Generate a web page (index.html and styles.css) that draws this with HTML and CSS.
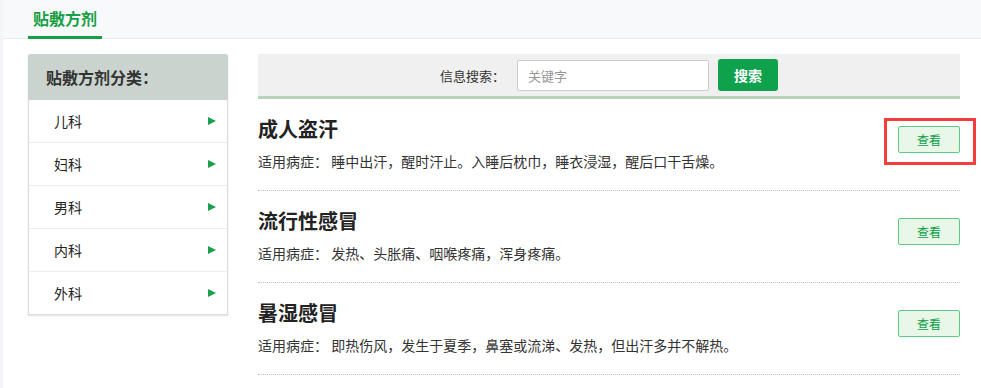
FILE: index.html
```html
<!DOCTYPE html>
<html lang="zh-CN">
<head>
    <meta charset="UTF-8">
    <meta name="viewport" content="width=device-width, initial-scale=1.0">
    <title>贴敷方剂</title>
    <link rel="stylesheet" href="styles.css">
</head>
<body>
    <header class="topbar">
        <a class="tab active" href="#">贴敷方剂</a>
    </header>
    <div class="container">
        <aside class="sidebar">
            <div class="sidebar-head">贴敷方剂分类：</div>
            <ul class="cat-list">
                <li><a href="#">儿科</a><span class="arrow"></span></li>
                <li><a href="#">妇科</a><span class="arrow"></span></li>
                <li><a href="#">男科</a><span class="arrow"></span></li>
                <li><a href="#">内科</a><span class="arrow"></span></li>
                <li><a href="#">外科</a><span class="arrow"></span></li>
            </ul>
        </aside>
        <main class="main">
            <form class="search-bar">
                <label for="kw">信息搜索：</label>
                <input type="text" id="kw" placeholder="关键字">
                <button type="button">搜索</button>
            </form>
            <ul class="recipe-list">
                <li class="recipe">
                    <div class="recipe-info">
                        <h3>成人盗汗</h3>
                        <p>适用病症： 睡中出汗，醒时汗止。入睡后枕巾，睡衣浸湿，醒后口干舌燥。</p>
                    </div>
                    <div class="view-wrap">
                        <a class="view-btn" href="#">查看</a>
                        <span class="highlight"></span>
                    </div>
                </li>
                <li class="recipe">
                    <div class="recipe-info">
                        <h3>流行性感冒</h3>
                        <p>适用病症： 发热、头胀痛、咽喉疼痛，浑身疼痛。</p>
                    </div>
                    <div class="view-wrap">
                        <a class="view-btn" href="#">查看</a>
                    </div>
                </li>
                <li class="recipe">
                    <div class="recipe-info">
                        <h3>暑湿感冒</h3>
                        <p>适用病症： 即热伤风，发生于夏季，鼻塞或流涕、发热，但出汗多并不解热。</p>
                    </div>
                    <div class="view-wrap">
                        <a class="view-btn" href="#">查看</a>
                    </div>
                </li>
            </ul>
        </main>
    </div>
</body>
</html>
```

FILE: styles.css
```css
body {
    margin: 0;
    padding: 0;
    font-family: "Noto Sans CJK SC", "Noto Sans", sans-serif;
    color: #333;
    background: #fff;
    border-left: 3px solid #f3f4f8;
    min-height: 388px;
    box-sizing: border-box;
}
ul {
    list-style: none;
    margin: 0;
    padding: 0;
}
a {
    text-decoration: none;
    color: inherit;
}
.topbar {
    height: 38px;
    background: #f8f9fb;
    border-bottom: 1px solid #ececec;
    padding-left: 25px;
    display: flex;
    align-items: stretch;
}
.tab {
    display: block;
    padding: 0 5px;
    font-size: 16px;
    font-weight: 700;
    line-height: 36px;
    color: #17a043;
    border-bottom: 3px solid #17a043;
    margin-bottom: -1px;
}
.container {
    display: flex;
    gap: 30px;
    width: 932px;
    margin: 15px 0 0 25px;
    align-items: flex-start;
}
.sidebar {
    width: 200px;
    flex-shrink: 0;
    border: 1px solid #dcdcdc;
    border-top: none;
    border-radius: 3px 3px 0 0;
    box-shadow: 0 1px 2px rgba(0, 0, 0, 0.12);
    box-sizing: border-box;
}
.sidebar-head {
    height: 46px;
    line-height: 46px;
    background: #cad3cd;
    padding-left: 18px;
    font-size: 16px;
    font-weight: 700;
    color: #333;
    border-radius: 3px 3px 0 0;
    margin: 0 -1px;
}
.cat-list li {
    height: 42px;
    display: flex;
    align-items: center;
    justify-content: space-between;
    padding: 0 11px 0 25px;
    font-size: 14px;
    color: #222;
    border-bottom: 1px solid #ececec;
}
.cat-list li:last-child {
    border-bottom: none;
}
.arrow {
    width: 0;
    height: 0;
    border-top: 4px solid transparent;
    border-bottom: 4px solid transparent;
    border-left: 8px solid #1aa04a;
}
.main {
    flex: 1;
}
.search-bar {
    height: 42px;
    margin: 0;
    background: #f0f0f0;
    border-bottom: 3px solid #b9d3bb;
    display: flex;
    align-items: center;
    justify-content: center;
    font-size: 13px;
}
.search-bar label {
    margin-right: 12px;
    color: #333;
}
.search-bar input {
    width: 192px;
    height: 31px;
    box-sizing: border-box;
    border: 1px solid #ccc;
    border-radius: 2px;
    padding: 0 10px;
    font-family: inherit;
    font-size: 13px;
    outline: none;
}
.search-bar input::placeholder {
    color: #999;
}
.search-bar button {
    width: 60px;
    height: 32px;
    margin-left: 9px;
    border: none;
    border-radius: 3px;
    background: #0fa24c;
    color: #fff;
    font-family: inherit;
    font-size: 14px;
    font-weight: 700;
    cursor: pointer;
}
.recipe {
    display: flex;
    align-items: center;
    justify-content: space-between;
    padding: 15px 0 17px;
    border-bottom: 1px dotted #c4c4c4;
}
.recipe h3 {
    margin: 0 0 5px;
    font-size: 20px;
    line-height: 30px;
    font-weight: 700;
    color: #222;
}
.recipe p {
    margin: 0;
    font-size: 14px;
    line-height: 24px;
    color: #333;
}
.view-wrap {
    position: relative;
    margin-bottom: 8px;
}
.view-btn {
    display: block;
    width: 62px;
    height: 27px;
    box-sizing: border-box;
    line-height: 25px;
    text-align: center;
    font-size: 12px;
    color: #0a9e45;
    background: #e8f7e8;
    border: 1px solid #5ccc84;
    border-radius: 2px;
}
.highlight {
    position: absolute;
    left: -14px;
    top: -8px;
    width: 92px;
    height: 47px;
    box-sizing: border-box;
    border: 3px solid #f43d3d;
}
```
